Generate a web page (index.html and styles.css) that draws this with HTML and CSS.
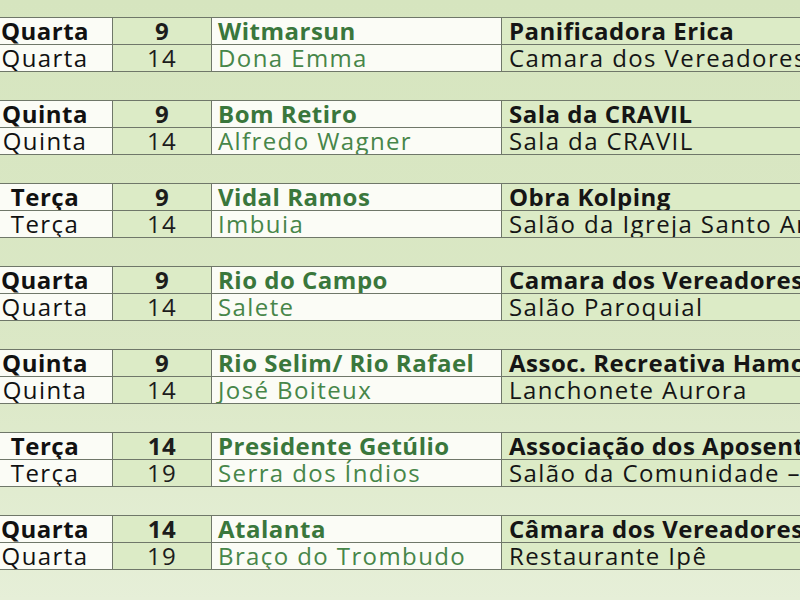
FILE: index.html
```html
<!DOCTYPE html>
<html lang="pt">
<head>
<meta charset="utf-8">
<link rel="stylesheet" href="styles.css">
</head>
<body>
<main class="schedule">
  <table class="group">
    <tr class="main"><td class="day">Quarta</td><td class="hour">9</td><td class="city">Witmarsun</td><td class="place">Panificadora Erica</td></tr>
    <tr class="sub"><td class="day">Quarta</td><td class="hour">14</td><td class="city">Dona Emma</td><td class="place">Camara dos Vereadores</td></tr>
  </table>
  <table class="group">
    <tr class="main"><td class="day">Quinta</td><td class="hour">9</td><td class="city">Bom Retiro</td><td class="place">Sala da CRAVIL</td></tr>
    <tr class="sub"><td class="day">Quinta</td><td class="hour">14</td><td class="city">Alfredo Wagner</td><td class="place">Sala da CRAVIL</td></tr>
  </table>
  <table class="group">
    <tr class="main"><td class="day">Terça</td><td class="hour">9</td><td class="city">Vidal Ramos</td><td class="place">Obra Kolping</td></tr>
    <tr class="sub"><td class="day">Terça</td><td class="hour">14</td><td class="city">Imbuia</td><td class="place">Salão da Igreja Santo Antônio</td></tr>
  </table>
  <table class="group">
    <tr class="main"><td class="day">Quarta</td><td class="hour">9</td><td class="city">Rio do Campo</td><td class="place">Camara dos Vereadores</td></tr>
    <tr class="sub"><td class="day">Quarta</td><td class="hour">14</td><td class="city">Salete</td><td class="place">Salão Paroquial</td></tr>
  </table>
  <table class="group">
    <tr class="main"><td class="day">Quinta</td><td class="hour">9</td><td class="city">Rio Selim/ Rio Rafael</td><td class="place">Assoc. Recreativa Hamonia</td></tr>
    <tr class="sub"><td class="day">Quinta</td><td class="hour">14</td><td class="city">José Boiteux</td><td class="place">Lanchonete Aurora</td></tr>
  </table>
  <table class="group">
    <tr class="main"><td class="day">Terça</td><td class="hour">14</td><td class="city">Presidente Getúlio</td><td class="place">Associação dos Aposentados</td></tr>
    <tr class="sub"><td class="day">Terça</td><td class="hour">19</td><td class="city">Serra dos Índios</td><td class="place">Salão da Comunidade – Centro</td></tr>
  </table>
  <table class="group">
    <tr class="main"><td class="day">Quarta</td><td class="hour">14</td><td class="city">Atalanta</td><td class="place">Câmara dos Vereadores</td></tr>
    <tr class="sub"><td class="day">Quarta</td><td class="hour">19</td><td class="city">Braço do Trombudo</td><td class="place">Restaurante Ipê</td></tr>
  </table>
</main>
</body>
</html>
```
FILE: styles.css
```css
html, body {
  margin: 0;
  padding: 0;
  width: 800px;
  height: 600px;
  overflow: hidden;
}
body {
  background: linear-gradient(180deg, #d6e5bf 0%, #dbe8c6 60%, #e6efd8 100%);
  font-family: "Open Sans", "DejaVu Sans", sans-serif;
  font-size: 24px;
}
.schedule {
  margin-left: -23px;
  padding-top: 17px;
  display: flex;
  flex-direction: column;
  gap: 28px;
}
.group {
  border-collapse: collapse;
  table-layout: fixed;
  width: 960px;
}
.group td {
  border: 1px solid #6f7769;
  height: 26px;
  padding: 0;
  line-height: 26px;
  white-space: nowrap;
  overflow: hidden;
  letter-spacing: 1.4px;
}
.day {
  width: 134px;
  text-align: center;
  background: #fbfcf6;
  color: #111;
}
.hour {
  width: 98px;
  text-align: center;
  background: #dcebc6;
  color: #1c1c1c;
}
.group td.city {
  width: 283px;
  padding-left: 6px;
  background: #fbfcf6;
  color: #478649;
}
.group td.place {
  padding-left: 7px;
  background: #dcebc6;
  color: #151515;
}
.group .main td {
  font-weight: 700;
  letter-spacing: 0.5px;
}
.group .main td.city {
  color: #3a773c;
}
```
